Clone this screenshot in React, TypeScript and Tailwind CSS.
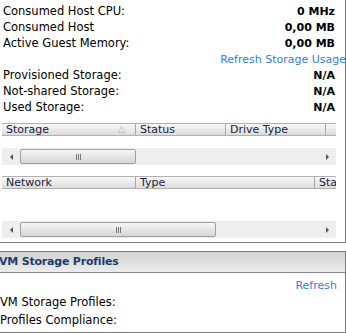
import React from "react";

const font = { fontFamily: '"DejaVu Sans", Verdana, sans-serif' };

function HeaderCell({ w, children, last }: { w: number; children?: React.ReactNode; last?: boolean }) {
  return (
    <div
      className={`h-full shrink-0 flex items-center pl-[4px] overflow-hidden whitespace-nowrap leading-[11px] ${last ? "" : "border-r border-[#a8a8a8]"}`}
      style={{ width: w }}
    >
      {children}
    </div>
  );
}

function Scrollbar({ thumbW }: { thumbW: number }) {
  return (
    <div className="h-[17px] w-[334px] bg-[#eeeeee] flex items-center relative">
      <div className="w-[18px] flex justify-center items-center">
        <div className="w-0 h-0 border-y-[3px] border-y-transparent border-r-[3px] border-r-[#555]" />
      </div>
      <div
        className="h-[15px] rounded-[2px] border border-[#a0a0a0] bg-gradient-to-b from-[#f6f6f6] to-[#d6d6d6] flex items-center justify-center"
        style={{ width: thumbW }}
      >
        <div className="flex gap-[1px]">
          <div className="w-[1px] h-[6px] bg-[#777]" />
          <div className="w-[1px] h-[6px] bg-[#777]" />
          <div className="w-[1px] h-[6px] bg-[#777]" />
        </div>
      </div>
      <div className="flex-1" />
      <div className="w-[18px] flex justify-center items-center">
        <div className="w-0 h-0 border-y-[3px] border-y-transparent border-l-[3px] border-l-[#555]" />
      </div>
    </div>
  );
}

function Row({ label, value }: { label: string; value?: string }) {
  return (
    <div className="h-[16px] flex items-center justify-between">
      <span>{label}</span>
      {value && <span className="font-bold text-[11px]">{value}</span>}
    </div>
  );
}

export default function App() {
  return (
    <div className="w-[346px] h-[333px] bg-white overflow-hidden text-[11.5px] text-black" style={font}>
      <div className="w-[346px] h-[243px] border-r border-b border-[#7a7a7a] relative">
        <div className="pt-[4px] pl-[3px] pr-[10px]">
          <Row label="Consumed Host CPU:" value="0 MHz" />
          <Row label="Consumed Host" value="0,00 MB" />
          <Row label="Active Guest Memory:" value="0,00 MB" />
          <div className="h-[16px] flex items-center justify-end mr-[-11px] whitespace-nowrap text-[#2f7de1] text-[11px]">
            Refresh Storage Usage
          </div>
          <Row label="Provisioned Storage:" value="N/A" />
          <Row label="Not-shared Storage:" value="N/A" />
          <Row label="Used Storage:" value="N/A" />
        </div>
        <div className="pl-[2px] mt-[7px]">
          <div className="w-[334px] h-[13px] border-y border-[#b0b0b0] bg-gradient-to-b from-[#f8f8f8] to-[#dcdcdc] flex text-[#1a1a40] text-[11px]">
            <HeaderCell w={134}>
              <span className="flex-1">Storage</span>
              <span className="text-[9px] text-[#aaa] mr-[10px]">△</span>
            </HeaderCell>
            <HeaderCell w={90}>Status</HeaderCell>
            <HeaderCell w={100}>Drive Type</HeaderCell>
            <HeaderCell w={10} last />
          </div>
          <div className="h-[12px]" />
          <Scrollbar thumbW={116} />
          <div className="h-[11px]" />
          <div className="w-[334px] h-[13px] border-y border-[#b0b0b0] bg-gradient-to-b from-[#f8f8f8] to-[#dcdcdc] flex text-[#1a1a40] text-[11px]">
            <HeaderCell w={134}>Network</HeaderCell>
            <HeaderCell w={179}>Type</HeaderCell>
            <HeaderCell w={21} last>Status</HeaderCell>
          </div>
          <div className="h-[32px]" />
          <Scrollbar thumbW={196} />
        </div>
      </div>
      <div className="mt-[8px] w-[346px] h-[82px] border-t border-r border-b border-[#7a7a7a]">
        <div className="h-[21px] border-b border-[#8a8a8a] bg-gradient-to-b from-[#d2d2d2] to-[#ececec] flex items-center font-bold text-[#1d3d6b] text-[11px] tracking-[-0.2px] -ml-[1px]">
          VM Storage Profiles
        </div>
        <div className="flex justify-end pr-[8px] pt-[5px] h-[20px] text-[#2f7de1] text-[11px]">Refresh</div>
        <div className="h-[18px] flex items-center pt-[2px]">VM Storage Profiles:</div>
        <div className="h-[19px] flex items-center">Profiles Compliance:</div>
      </div>
    </div>
  );
}
